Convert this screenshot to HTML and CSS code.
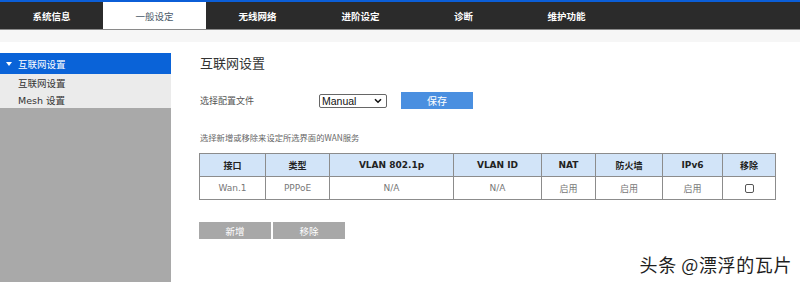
FILE: index.html
```html
<!DOCTYPE html>
<html lang="zh-CN">
<head>
<meta charset="utf-8">
<title>互联网设置</title>
<link rel="stylesheet" href="styles.css">
</head>
<body>
<div class="page">
  <div class="topbar">
    <div class="tab">系统信息</div>
    <div class="tab active">一般设定</div>
    <div class="tab">无线网络</div>
    <div class="tab">进阶设定</div>
    <div class="tab">诊断</div>
    <div class="tab">维护功能</div>
  </div>
  <div class="strip"></div>
  <div class="main">
    <div class="sidebar">
      <div class="side-head"><span class="tri"></span>互联网设置</div>
      <div class="side-item">互联网设置</div>
      <div class="side-item">Mesh 设置</div>
      <div class="side-fill"></div>
    </div>
    <div class="content">
      <div class="title">互联网设置</div>
      <div class="form-row">
        <div class="label">选择配置文件</div>
        <div class="select"><span>Manual</span>
          <svg width="8" height="6" viewBox="0 0 8 6"><path d="M1 1.2 L4 4.2 L7 1.2" fill="none" stroke="#111" stroke-width="1.6"/></svg>
        </div>
        <div class="btn-save">保存</div>
      </div>
      <div class="note">选择新增或移除来设定所选界面的WAN服务</div>
      <table class="wan">
        <thead>
          <tr>
            <th class="c1">接口</th>
            <th class="c2">类型</th>
            <th class="c3">VLAN 802.1p</th>
            <th class="c4">VLAN ID</th>
            <th class="c5">NAT</th>
            <th class="c6">防火墙</th>
            <th class="c7">IPv6</th>
            <th class="c8">移除</th>
          </tr>
        </thead>
        <tbody>
          <tr>
            <td>Wan.1</td>
            <td>PPPoE</td>
            <td>N/A</td>
            <td>N/A</td>
            <td>启用</td>
            <td>启用</td>
            <td>启用</td>
            <td><span class="check"></span></td>
          </tr>
        </tbody>
      </table>
      <div class="actions">
        <div class="btn-gray">新增</div>
        <div class="btn-gray">移除</div>
      </div>
    </div>
  </div>
  <div class="watermark">头条 @漂浮的瓦片</div>
</div>
</body>
</html>
```
FILE: styles.css
```css
* { box-sizing: border-box; }
html, body { margin: 0; padding: 0; }
body {
  width: 800px;
  height: 282px;
  overflow: hidden;
  background: #fff;
  font-family: "DejaVu Sans", "Noto Sans CJK SC", sans-serif;
  color: #333;
}
.page {
  position: relative;
  width: 800px;
  height: 282px;
  display: flex;
  flex-direction: column;
}
.topbar {
  display: flex;
  height: 30px;
  border-top: 2px solid #0b5ed7;
  background: #2b2b2b;
  border-bottom: 1px solid #8a8a8a;
}
.tab {
  width: 103px;
  display: flex;
  align-items: center;
  justify-content: center;
  color: #fff;
  font-size: 9.5px;
  font-weight: bold;
  font-family: "Noto Sans CJK SC", sans-serif;
}
.tab.active {
  background: #fff;
  color: #4a5a6a;
  font-weight: normal;
}
.strip {
  height: 12px;
  background: #f6f6f6;
}
.main {
  flex: 1;
  display: flex;
  padding-top: 11px;
}
.sidebar {
  width: 171px;
  display: flex;
  flex-direction: column;
}
.side-head {
  height: 21px;
  background: #0a63d8;
  color: #fff;
  font-size: 9.5px;
  font-family: "Noto Sans CJK SC", sans-serif;
  display: flex;
  align-items: center;
  padding-left: 6px;
}
.tri {
  width: 0;
  height: 0;
  border-left: 3px solid transparent;
  border-right: 3px solid transparent;
  border-top: 4px solid #fff;
  margin-right: 6px;
}
.side-item {
  height: 17px;
  background: #ebebeb;
  font-size: 9.5px;
  color: #333;
  display: flex;
  align-items: center;
  padding-left: 18px;
  font-family: "DejaVu Sans", "Noto Sans CJK SC", sans-serif;
}
.side-fill {
  flex: 1;
  background: #a9a9a9;
}
.content {
  flex: 1;
  padding-left: 28px;
  display: flex;
  flex-direction: column;
}
.title {
  font-size: 13px;
  line-height: 20px;
  color: #333;
  font-family: "Noto Sans CJK SC", sans-serif;
  padding-left: 1px;
}
.form-row {
  margin-top: 19px;
  display: flex;
  align-items: center;
  height: 17px;
}
.label {
  width: 120px;
  padding-left: 1px;
  font-size: 9px;
  color: #555;
  font-family: "Noto Sans CJK SC", sans-serif;
}
.select {
  width: 68px;
  height: 14px;
  border: 1px solid #666;
  border-radius: 2px;
  background: #fff;
  display: flex;
  align-items: center;
  justify-content: space-between;
  padding: 0 4px 0 2px;
  font-family: "Liberation Sans", sans-serif;
  font-size: 10.5px;
  color: #111;
}
.btn-save {
  margin-left: 14px;
  width: 72px;
  height: 17px;
  background: #4a8fe0;
  color: #fff;
  font-size: 10px;
  font-family: "Noto Sans CJK SC", sans-serif;
  display: flex;
  align-items: center;
  justify-content: center;
}
.note {
  margin-top: 22px;
  padding-left: 1px;
  font-size: 8.3px;
  line-height: 12px;
  color: #666;
  font-family: "Noto Sans CJK SC", sans-serif;
}
.wan {
  margin-top: 10px;
  width: 576px;
  border-collapse: collapse;
  table-layout: fixed;
}
.wan th, .wan td {
  border: 1px solid #8c8c8c;
  text-align: center;
  padding: 0;
  font-size: 9px;
}
.wan th {
  height: 23px;
  background: #d2e4f8;
  color: #222;
  font-weight: bold;
  font-family: "DejaVu Sans", "Noto Sans CJK SC", sans-serif;
}
.wan td {
  height: 23px;
  color: #777;
  font-family: "DejaVu Sans", "Noto Sans CJK SC", sans-serif;
}
.c1 { width: 66px; }
.c2 { width: 64px; }
.c3 { width: 124px; }
.c4 { width: 88px; }
.c5 { width: 54px; }
.c6 { width: 67px; }
.c7 { width: 60px; }
.c8 { width: 53px; }
.check {
  display: inline-block;
  width: 9px;
  height: 9px;
  border: 1px solid #555;
  border-radius: 2px;
  vertical-align: middle;
}
.actions {
  margin-top: 22px;
  display: flex;
  gap: 2px;
}
.btn-gray {
  width: 72px;
  height: 17px;
  background: #a8a8a8;
  color: #fff;
  font-size: 9.5px;
  font-family: "Noto Sans CJK SC", sans-serif;
  display: flex;
  align-items: center;
  justify-content: center;
}
.watermark {
  position: absolute;
  right: 8px;
  bottom: 5px;
  font-size: 18px;
  color: #1e1e1e;
  font-family: "Noto Sans CJK SC", sans-serif;
  text-shadow: 0 0 2px #fff, 0 0 2px #fff;
  letter-spacing: 0.6px;
}
```
